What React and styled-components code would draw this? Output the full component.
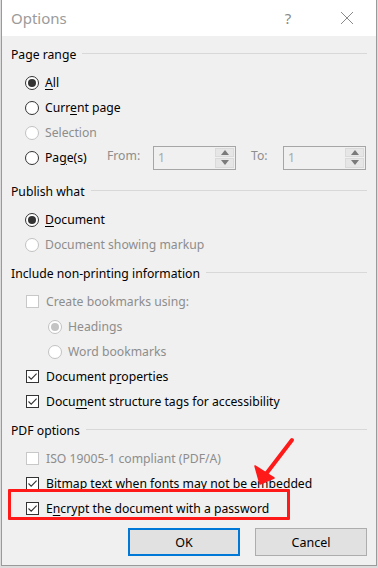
import React from 'react';
import styled, { createGlobalStyle } from 'styled-components';

const GlobalStyle = createGlobalStyle`
  html, body {
    margin: 0;
    padding: 0;
    background: #dcdcdc;
  }
  body {
    font-family: "Segoe UI", "Noto Sans", "Liberation Sans", sans-serif;
    font-size: 12.2px;
    color: #000;
  }
`;

const Dialog = styled.div`
  position: relative;
  width: 374px;
  height: 565px;
  margin-left: 1px;
  border: 1px solid #9a9a9a;
  border-top: none;
  background: #f0f0f0;
  display: flex;
  flex-direction: column;
  overflow: hidden;
`;

const TitleBar = styled.div`
  height: 36px;
  background: #fff;
  display: flex;
  align-items: center;
  padding-left: 9px;
`;

const Title = styled.div`
  flex: 1;
  font-size: 15px;
  color: #9b9b9b;
`;

const TitleButton = styled.div`
  width: ${(p) => p.w}px;
  height: 36px;
  display: flex;
  align-items: center;
  justify-content: center;
  color: #8a8a8a;
  font-size: 15px;
`;

const Body = styled.div`
  padding: 0 9px 0 9px;
  display: flex;
  flex-direction: column;
`;

const Group = styled.div`
  margin-top: ${(p) => p.top}px;
  display: flex;
  flex-direction: column;
`;

const GroupHeader = styled.div`
  height: 20px;
  display: flex;
  align-items: center;
  gap: 6px;
  margin-bottom: 6px;
  &::after {
    content: '';
    flex: 1;
    height: 1px;
    background: #d8d8d8;
    margin-top: -1px;
  }
`;

const Row = styled.div`
  height: 25px;
  display: flex;
  align-items: center;
  padding-left: ${(p) => p.indent || 15}px;
  color: ${(p) => (p.disabled ? '#8d8d8d' : '#000')};
`;

const Radio = styled.span`
  width: 14px;
  height: 14px;
  box-sizing: border-box;
  border-radius: 50%;
  border: 1px solid ${(p) => (p.disabled ? '#c2c2c2' : '#333')};
  background: #fff;
  margin: 0 6px 0 -1px;
  display: flex;
  align-items: center;
  justify-content: center;
  flex-shrink: 0;
  &::after {
    content: '';
    display: ${(p) => (p.checked ? 'block' : 'none')};
    width: 8px;
    height: 8px;
    border-radius: 50%;
    background: ${(p) => (p.disabled ? '#c4c4c4' : '#333')};
  }
`;

const Box = styled.span`
  width: 13px;
  height: 13px;
  box-sizing: border-box;
  border: 1px solid ${(p) => (p.disabled ? '#c8c8c8' : '#333')};
  background: #fff;
  margin-right: 7px;
  display: flex;
  align-items: center;
  justify-content: center;
  flex-shrink: 0;
`;

const Label = styled.span`
  width: ${(p) => (p.w ? `${p.w}px` : 'auto')};
  white-space: nowrap;
  u {
    text-decoration: underline;
    text-underline-offset: 2px;
  }
`;

const SideLabel = styled.span`
  width: ${(p) => p.w}px;
  color: #8d8d8d;
  margin-top: -4px;
`;

const Spin = styled.div`
  width: 83px;
  height: 24px;
  box-sizing: border-box;
  border: 1px solid #a6a6a6;
  background: #f0f0f0;
  display: flex;
`;

const SpinValue = styled.div`
  flex: 1;
  padding-left: 4px;
  display: flex;
  align-items: center;
  color: #a8a8a8;
`;

const SpinArrows = styled.div`
  width: 19px;
  display: flex;
  flex-direction: column;
  gap: 1px;
  padding: 1px 1px 1px 0;
`;

const SpinBtn = styled.div`
  flex: 1;
  background: #e6e6e6;
  border: 1px solid #dadada;
  display: flex;
  align-items: center;
  justify-content: center;
`;

const Footer = styled.div`
  display: flex;
  justify-content: flex-end;
  gap: 15px;
  padding: 7px 9px 0 0;
`;

const Button = styled.button`
  width: 112px;
  height: 28px;
  box-sizing: border-box;
  border: ${(p) => (p.primary ? '2px solid #0078d7' : '1px solid #adadad')};
  background: #e1e1e1;
  font-family: inherit;
  font-size: 12.5px;
  color: #000;
  padding: 0;
`;

const Highlight = styled.div`
  position: absolute;
  left: 6px;
  top: 489px;
  width: 282px;
  height: 31px;
  box-sizing: border-box;
  border: 3px solid #ff1a1a;
  border-radius: 1px;
  pointer-events: none;
`;

const ArrowLayer = styled.svg`
  position: absolute;
  left: 0;
  top: 0;
  pointer-events: none;
`;

const Check = () => (
  <svg width="11" height="11" viewBox="0 0 11 11">
    <path d="M1.5 5.5 L4.2 8.2 L9.6 2.6" fill="none" stroke="#333" strokeWidth="1.1" />
  </svg>
);

const Tri = ({ up }) => (
  <svg width="8" height="5" viewBox="0 0 8 5">
    <path d={up ? 'M0 5 L4 0 L8 5 Z' : 'M0 0 L8 0 L4 5 Z'} fill="#7a7a7a" />
  </svg>
);

const SpinBox = () => (
  <Spin>
    <SpinValue>1</SpinValue>
    <SpinArrows>
      <SpinBtn><Tri up /></SpinBtn>
      <SpinBtn><Tri /></SpinBtn>
    </SpinArrows>
  </Spin>
);

const RadioRow = ({ checked, disabled, indent, children }) => (
  <Row disabled={disabled} indent={indent}>
    <Radio checked={checked} disabled={disabled} />
    <Label>{children}</Label>
  </Row>
);

const CheckRow = ({ checked, disabled, children }) => (
  <Row disabled={disabled}>
    <Box disabled={disabled}>{checked && <Check />}</Box>
    <Label>{children}</Label>
  </Row>
);

export default function App() {
  return (
    <>
      <GlobalStyle />
      <Dialog>
        <TitleBar>
          <Title>Options</Title>
          <TitleButton w={60}>?</TitleButton>
          <TitleButton w={58}>
            <svg width="14" height="14" viewBox="0 0 14 14">
              <path d="M1 1 L13 13 M13 1 L1 13" stroke="#8a8a8a" strokeWidth="1" />
            </svg>
          </TitleButton>
        </TitleBar>

        <Body>
          <Group top={8}>
            <GroupHeader>Page range</GroupHeader>
            <RadioRow checked><u>A</u>ll</RadioRow>
            <RadioRow>Curr<u>e</u>nt page</RadioRow>
            <RadioRow disabled>Selection</RadioRow>
            <Row>
              <Radio />
              <Label w={62}>Pa<u>g</u>e(s)</Label>
              <SideLabel w={46}>From:</SideLabel>
              <SpinBox />
              <SideLabel w={32} style={{ marginLeft: 15 }}>To:</SideLabel>
              <SpinBox />
            </Row>
          </Group>

          <Group top={11}>
            <GroupHeader>Publish what</GroupHeader>
            <RadioRow checked><u>D</u>ocument</RadioRow>
            <RadioRow disabled>Document showing markup</RadioRow>
          </Group>

          <Group top={6}>
            <GroupHeader>Include non-printing information</GroupHeader>
            <CheckRow disabled>Create bookmarks using:</CheckRow>
            <RadioRow disabled checked indent={38}>Headings</RadioRow>
            <RadioRow disabled indent={38}>Word bookmarks</RadioRow>
            <CheckRow checked>Document p<u>r</u>operties</CheckRow>
            <CheckRow checked>Docu<u>m</u>ent structure tags for accessibility</CheckRow>
          </Group>

          <Group top={6}>
            <GroupHeader>PDF options</GroupHeader>
            <CheckRow disabled>ISO 19005-1 compliant (PDF/A)</CheckRow>
            <CheckRow checked>Bitmap te<u>x</u>t when fonts may not be embedded</CheckRow>
            <CheckRow checked>E<u>n</u>crypt the document with a password</CheckRow>
          </Group>
        </Body>

        <Footer>
          <Button primary>OK</Button>
          <Button>Cancel</Button>
        </Footer>

        <Highlight />
        <ArrowLayer width="378" height="568" viewBox="0 0 378 568">
          <line x1="290" y1="440" x2="264" y2="474" stroke="#ff1a1a" strokeWidth="4" strokeLinecap="round" />
          <path d="M258 484 L253 466 L272 478 Z" fill="#ff1a1a" stroke="#ff1a1a" strokeWidth="1.5" strokeLinejoin="round" />
        </ArrowLayer>
      </Dialog>
    </>
  );
}
